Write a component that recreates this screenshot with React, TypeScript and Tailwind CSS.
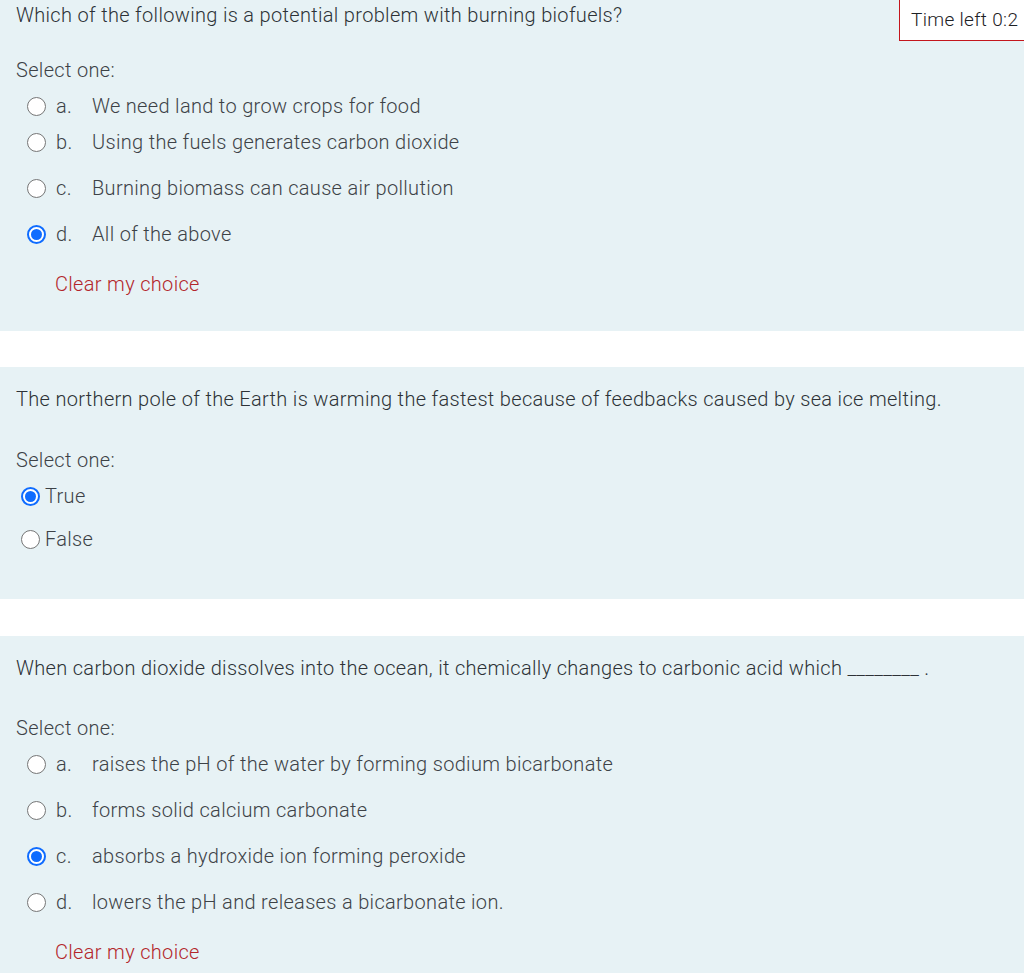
import React from "react";

type Opt = { letter?: string; text: string; checked?: boolean; gap?: string };

function Radio({ checked }: { checked?: boolean }) {
  return checked ? (
    <span className="inline-flex h-[19px] w-[19px] shrink-0 items-center justify-center rounded-full border-[2px] border-[#0f6cff] bg-white">
      <span className="h-[11px] w-[11px] rounded-full bg-[#0f6cff]" />
    </span>
  ) : (
    <span className="inline-block h-[19px] w-[19px] shrink-0 rounded-full border border-[#767676] bg-white" />
  );
}

function Choices({ opts }: { opts: Opt[] }) {
  return (
    <div className="flex flex-col pl-[11px]">
      {opts.map((o) => (
        <div key={o.text} className={`flex h-[36px] items-center ${o.gap ?? ""}`}>
          <Radio checked={o.checked} />
          <span className="ml-[10px] w-[36px]">{o.letter}</span>
          <span>{o.text}</span>
        </div>
      ))}
    </div>
  );
}

function Clear() {
  return <div className="mt-[18px] pl-[39px] text-[#b3262b]">Clear my choice</div>;
}

export default function App() {
  return (
    <div className="min-h-[973px] overflow-hidden bg-white font-['Roboto',sans-serif] text-[20px] font-light leading-[28px] tracking-[0.32px] text-[#3d4247]">
      <section className="relative h-[331px] bg-[#e7f2f5] px-4">
        <div className="absolute left-[899px] top-[-1px] h-[42px] w-[140px] border border-[#c4161c] bg-white pl-[11px] pt-[6px] text-[19px] text-[#1d2125]">
          Time left 0:2
        </div>
        <p className="pt-[1px] text-[#2d3237]">
          Which of the following is a potential problem with burning biofuels?
        </p>
        <p className="mt-[27px]">Select one:</p>
        <div className="mt-[4px]">
          <Choices
            opts={[
              { letter: "a.", text: "We need land to grow crops for food" },
              { letter: "b.", text: "Using the fuels generates carbon dioxide" },
              { letter: "c.", text: "Burning biomass can cause air pollution", gap: "mt-[10px]" },
              { letter: "d.", text: "All of the above", checked: true, gap: "mt-[10px]" },
            ]}
          />
        </div>
        <Clear />
      </section>

      <section className="mt-[36px] h-[232px] bg-[#e7f2f5] px-4">
        <p className="pt-[18px] text-[#2d3237]">
          The northern pole of the Earth is warming the fastest because of feedbacks caused by sea ice melting.
        </p>
        <p className="mt-[33px]">Select one:</p>
        <div className="mt-[4px] flex flex-col pl-[5px]">
          <div className="flex h-[36px] items-center gap-[5px]">
            <Radio checked />
            <span>True</span>
          </div>
          <div className="mt-[7px] flex h-[36px] items-center gap-[5px]">
            <Radio />
            <span>False</span>
          </div>
        </div>
      </section>

      <section className="mt-[37px] h-[337px] bg-[#e7f2f5] px-4">
        <p className="pt-[18px] text-[#2d3237]">
          When carbon dioxide dissolves into the ocean, it chemically changes to carbonic acid which ________ .
        </p>
        <p className="mt-[32px]">Select one:</p>
        <div className="mt-[4px]">
          <Choices
            opts={[
              { letter: "a.", text: "raises the pH of the water by forming sodium bicarbonate" },
              { letter: "b.", text: "forms solid calcium carbonate", gap: "mt-[10px]" },
              { letter: "c.", text: "absorbs a hydroxide ion forming peroxide", checked: true, gap: "mt-[10px]" },
              { letter: "d.", text: "lowers the pH and releases a bicarbonate ion.", gap: "mt-[10px]" },
            ]}
          />
        </div>
        <Clear />
      </section>
    </div>
  );
}
